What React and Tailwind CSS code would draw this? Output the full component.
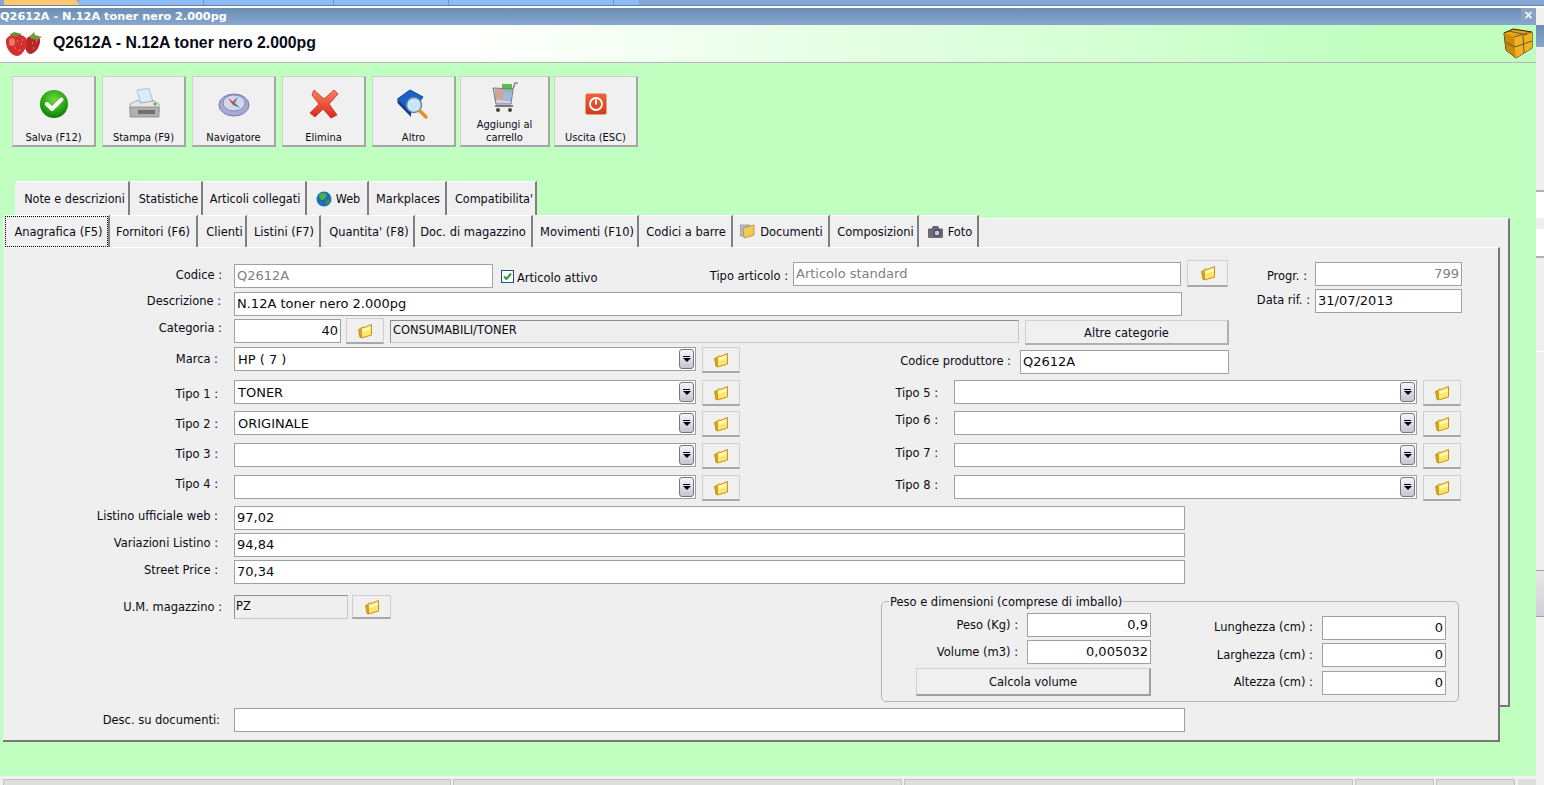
import React from 'react';

const FolderIcon = () => (
  <svg width="16" height="16" viewBox="0 0 16 16">
    <path d="M1.5 6.5 L5 5 L5 14 L3 14.5 Z" fill="#dca91e" stroke="#b8860b" strokeWidth="0.8" />
    <path d="M4 5 L6 3.8 L7 4.6 L14.5 1.5 L14.5 12 L4.5 15 Z" fill="#ffe66e" stroke="#c8920f" strokeWidth="1" />
    <path d="M5.5 6.2 L13.5 3.2 L13.5 6.2 L5.5 9 Z" fill="#fff8c0" />
  </svg>
);

const CheckIcon = () => (
  <svg width="30" height="30" viewBox="0 0 30 30">
    <defs>
      <radialGradient id="gr" cx="50%" cy="35%" r="70%">
        <stop offset="0%" stopColor="#6fdc3a" />
        <stop offset="70%" stopColor="#1f9a12" />
        <stop offset="100%" stopColor="#0b6e0b" />
      </radialGradient>
    </defs>
    <circle cx="15" cy="15" r="14" fill="url(#gr)" />
    <path d="M8 15 L13 20 L22.5 10.5" fill="none" stroke="#fff" strokeWidth="4" strokeLinecap="round" strokeLinejoin="round" />
  </svg>
);

const PrinterIcon = () => (
  <svg width="32" height="32" viewBox="0 0 32 32">
    <path d="M9 2 L21 0.5 L25 14 L13 16 Z" fill="#d8ecfb" stroke="#9fb4c8" strokeWidth="0.8" />
    <path d="M2 16 L10 12 L13 15 L25 13 L24 12 L31 16 L31 24 L2 24 Z" fill="#e6e6e6" stroke="#999" strokeWidth="0.8" />
    <path d="M2 19 L31 19 L31 29 L2 29 Z" fill="#b0b0b0" stroke="#888" strokeWidth="0.8" />
    <rect x="10" y="22" width="17" height="4" fill="#6f6f6f" />
    <circle cx="27" cy="16" r="1.5" fill="#45b445" />
  </svg>
);

const CompassIcon = () => (
  <svg width="32" height="26" viewBox="0 0 32 26">
    <ellipse cx="16" cy="14" rx="15" ry="11" fill="#a9a9d8" stroke="#7777a8" />
    <ellipse cx="16" cy="12" rx="11" ry="8" fill="#d4d6ee" stroke="#8a8ab8" />
    <path d="M10 7 L17 12 L15 14 Z" fill="#dd3322" />
    <path d="M22 17 L15 14 L17 12 Z" fill="#2f9a4a" />
    <path d="M20 6 L17 12 L15 10 Z" fill="#5577cc" />
  </svg>
);

const CrossIcon = () => (
  <svg width="30" height="30" viewBox="0 0 30 30">
    <defs>
      <linearGradient id="rd" x1="0" y1="0" x2="0" y2="1">
        <stop offset="0%" stopColor="#ff8060" />
        <stop offset="100%" stopColor="#d8281a" />
      </linearGradient>
    </defs>
    <path d="M5 1 L15 10 L25 1 L29 5 L20 15 L28 26 L22 29 L14 20 L6 28 L1 24 L10 15 L3 6 Z" fill="url(#rd)" stroke="#c02a18" strokeWidth="0.8" />
  </svg>
);

const BookIcon = () => (
  <svg width="33" height="31" viewBox="0 0 33 31">
    <path d="M0.5 10 L13 1 L26 8 L14 24 Z" fill="#1c63c8" stroke="#0f3e8c" />
    <path d="M0.5 10 L14 24 L14 28 L0.5 14 Z" fill="#0f3e8c" />
    <circle cx="17" cy="16" r="7.5" fill="#c8e6f8" stroke="#5e88b0" strokeWidth="1.5" />
    <path d="M23 22 L29 28" stroke="#f08a2a" strokeWidth="3.5" strokeLinecap="round" />
  </svg>
);

const CartIcon = () => (
  <svg width="28" height="32" viewBox="0 0 28 32">
    <rect x="11" y="3" width="10" height="10" fill="#4fc04f" />
    <rect x="4" y="8" width="9" height="11" fill="#ee8a3a" />
    <rect x="12" y="11" width="8" height="9" fill="#7fb8e8" />
    <path d="M2 7 L22 8 L20 23 L5 23 Z" fill="#b9b9dc" fillOpacity="0.55" stroke="#76768c" />
    <path d="M22 8 L24 2 L27 2" fill="none" stroke="#8a8a8a" strokeWidth="1.6" />
    <rect x="4" y="24" width="18" height="2" fill="#7a7a7a" />
    <circle cx="7" cy="29" r="2" fill="#444" />
    <circle cx="19" cy="29" r="2" fill="#444" />
  </svg>
);

const PowerIcon = () => (
  <svg width="22" height="22" viewBox="0 0 22 22">
    <defs>
      <linearGradient id="pw" x1="0" y1="0" x2="0" y2="1">
        <stop offset="0%" stopColor="#f0623c" />
        <stop offset="100%" stopColor="#cf3c16" />
      </linearGradient>
    </defs>
    <rect x="0.5" y="0.5" width="21" height="21" rx="2" fill="url(#pw)" />
    <circle cx="11" cy="11" r="6" fill="none" stroke="#fff" strokeWidth="1.8" />
    <path d="M11 6.5 L11 11.5" stroke="#fff" strokeWidth="2" />
  </svg>
);

const CubeIcon = () => (
  <svg width="30" height="31" viewBox="0 0 30 31">
    <path d="M1 5 L10 1 L29 4 L29 20 L13 30 L3 22 Z" fill="#e5a30f" stroke="#2b1d00" strokeWidth="1" />
    <path d="M1 5 L11 9 L13 30 L3 22 Z" fill="#c98a08" />
    <path d="M11 9 L29 4 L29 20 L13 30 Z" fill="#f0b21e" />
    <path d="M11 9 L29 4 M2 14 L12 19 L29 13 M20 6 L21 25 M6 3 L24 7" fill="none" stroke="#6a5a3a" strokeWidth="1" />
  </svg>
);

const StrawberryIcon = () => (
  <svg width="38" height="26" viewBox="0 0 38 26">
    <path d="M22 7 C26 3 33 4 35 8 C36 14 31 22 26 23 C21 23 18 16 22 7 Z" fill="#b82626" />
    <path d="M1 9 C2 3 16 1 21 7 C24 13 18 25 12 25 C6 25 0 16 1 9 Z" fill="#d42e2e" />
    <path d="M4 4 L9 1 L17 3 L11 6 Z" fill="#6a8a34" />
    <path d="M24 6 L29 1 L30 4 L37 6 L32 9 L27 8 Z" fill="#6f9a3a" />
    <ellipse cx="7" cy="11" rx="3" ry="4" fill="#ee7565" />
    <path d="M12 10 h1 M16 13 h1 M10 17 h1 M14 19 h1 M17 9 h1 M27 12 h1 M31 10 h1 M28 17 h1" stroke="#f6c8a8" strokeWidth="1" />
  </svg>
);

const GlobeIcon = () => (
  <svg width="16" height="16" viewBox="0 0 16 16">
    <circle cx="8" cy="8" r="7.5" fill="#1f6fb8" />
    <path d="M3 4 C6 1 10 2 11 4 C9 6 10 8 7 9 C5 9 3 7 3 4 Z" fill="#4fae3c" />
    <path d="M10 10 L14 8 L13 12 L10 14 Z" fill="#3f9a34" />
  </svg>
);

const DocsIcon = () => (
  <svg width="15" height="15" viewBox="0 0 15 15">
    <rect x="0.5" y="1" width="9" height="11" fill="#b4bcd0" stroke="#7a829a" strokeWidth="0.6" />
    <path d="M3 4 L14 1 L14 11 L4 14 Z" fill="#f0cc58" stroke="#b88a18" strokeWidth="0.8" />
  </svg>
);

const CameraIcon = () => (
  <svg width="15" height="12" viewBox="0 0 15 12">
    <path d="M0.5 3 L4 3 L5 0.5 L10 0.5 L11 3 L14.5 3 L14.5 11.5 L0.5 11.5 Z" fill="#6b6b7a" stroke="#3a3a44" strokeWidth="0.6" />
    <circle cx="9" cy="7" r="3" fill="#c8c8d8" stroke="#2f2f38" />
  </svg>
);

const FolderButton = ({ className }) => (
  <div className={`flex items-center justify-center bg-[#f0f0f0] border border-[#cfcfcf] border-b-2 border-b-[#a8a8a8] shrink-0 ${className}`}>
    <FolderIcon />
  </div>
);

const Field = ({ value, className = '', align = 'left', muted = false }) => (
  <div className={`flex items-center shrink-0 h-[24px] bg-white border border-[#a0a0a0] px-[2px] font-['DejaVu_Sans',sans-serif] text-[13px] ${align === 'right' ? 'justify-end' : ''} ${muted ? 'text-[#808080]' : 'text-[#0a0a14]'} ${className}`}>
    {value}
  </div>
);

const Combo = ({ value, className = '' }) => (
  <div className={`flex items-center justify-between shrink-0 h-[24px] bg-white border border-[#a0a0a0] pl-[3px] pr-px font-['DejaVu_Sans',sans-serif] text-[13px] ${className}`}>
    <span className="pt-px">{value}</span>
    <div className="flex flex-col items-center justify-center gap-px w-[15px] h-[20px] rounded-[3px] border border-[#777] bg-gradient-to-b from-[#f6f6f8] to-[#c6c6d2]">
      <div className="w-[7px] h-px bg-black" />
      <div className="w-0 h-0 border-x-[4px] border-x-transparent border-t-[4px] border-t-black" />
    </div>
  </div>
);

const Label = ({ children, className = '' }) => (
  <div className={`text-right shrink-0 h-[16px] leading-[16px] whitespace-nowrap ${className}`}>{children}</div>
);

const toolbar = [
  { text: 'Salva (F12)', icon: <CheckIcon />, w: 'w-[84px]' },
  { text: 'Stampa (F9)', icon: <PrinterIcon />, w: 'w-[84px]' },
  { text: 'Navigatore', icon: <CompassIcon />, w: 'w-[84px]' },
  { text: 'Elimina', icon: <CrossIcon />, w: 'w-[84px]' },
  { text: 'Altro', icon: <BookIcon />, w: 'w-[84px] mr-[-2px]' },
  { text: 'Aggiungi al carrello', icon: <CartIcon />, w: 'w-[90px] mr-[-2px]', twoLines: true },
  { text: 'Uscita (ESC)', icon: <PowerIcon />, w: 'w-[84px]' },
];

const tabsTop = [
  { text: 'Note e descrizioni', w: 'w-[115px] pl-[6px]' },
  { text: 'Statistiche', w: 'w-[73px] pl-[6px]' },
  { text: 'Articoli collegati', w: 'w-[104px] pl-[2px]' },
  { text: 'Web', w: 'w-[62px] pl-[2px]', icon: <GlobeIcon /> },
  { text: 'Markplaces', w: 'w-[78px] pl-[2px]' },
  { text: "Compatibilita'", w: 'w-[90px] pl-[6px]' },
];

const tabsBottom = [
  { text: 'Anagrafica (F5)', w: 'w-[105px]', active: true },
  { text: 'Fornitori (F6)', w: 'w-[88px]' },
  { text: 'Clienti', w: 'w-[49px] pl-[6px]' },
  { text: 'Listini (F7)', w: 'w-[74px] pl-[2px]' },
  { text: "Quantita' (F8)", w: 'w-[94px] pl-[4px]' },
  { text: 'Doc. di magazzino', w: 'w-[118px]' },
  { text: 'Movimenti (F10)', w: 'w-[106px] pl-[4px]' },
  { text: 'Codici a barre', w: 'w-[94px] pl-[2px]' },
  { text: 'Documenti', w: 'w-[97px] pl-[2px]', icon: <DocsIcon /> },
  { text: 'Composizioni', w: 'w-[89px] pl-[4px]' },
  { text: 'Foto', w: 'w-[60px] pl-[4px]', icon: <CameraIcon /> },
];

const comboRows = [
  { left: 'Tipo 1 :', value: 'TONER', right: 'Tipo 5 :', top: 'mt-[6px]', lm: 'mt-[6px]', rm: 'mt-[5px]' },
  { left: 'Tipo 2 :', value: 'ORIGINALE', right: 'Tipo 6 :', top: 'mt-[5px]', lm: 'mt-[5px]', rm: 'mt-px' },
  { left: 'Tipo 3 :', value: '', right: 'Tipo 7 :', top: 'mt-[6px]', lm: 'mt-[3px]', rm: 'mt-[2px]' },
  { left: 'Tipo 4 :', value: '', right: 'Tipo 8 :', top: 'mt-[6px]', lm: 'mt-[1px]', rm: 'mt-[2px]' },
];

const priceRows = [
  { label: 'Listino ufficiale web :', value: '97,02' },
  { label: 'Variazioni Listino :', value: '94,84' },
  { label: 'Street Price :', value: '70,34' },
];

const statusCells = ['w-[448px]', 'w-[449px]', 'w-[449px]', 'w-[79px]', 'w-[79px]'];

const App = () => {
  return (
    <div className="w-[1544px] h-[785px] overflow-hidden flex flex-col bg-[#f0f0f0] font-['DejaVu_Sans_Condensed','DejaVu_Sans',sans-serif] text-[12.75px] text-[#0a0a14]">
      {/* strip of the window behind */}
      <div className="flex h-[6px] shrink-0 bg-[#85a5d4] border-b border-[#5e83b4]">
        <div className="w-[75px] ml-[4px] bg-[#ffc870] rounded-tr-lg" />
        <div className="w-[125px] bg-[#8fbaf5] border-r border-[#6d94c8]" />
        <div className="w-[130px] bg-[#8fbaf5] border-r border-[#6d94c8]" />
        <div className="w-[115px] bg-[#8fbaf5] border-r border-[#6d94c8]" />
        <div className="w-[165px] bg-[#8fbaf5] border-r border-[#6d94c8]" />
        <div className="w-[25px] bg-[#8fbaf5]" />
      </div>
      <div className="h-[2px] shrink-0 bg-white" />

      <div className="flex flex-1 min-h-0">
        {/* main window */}
        <div className="w-[1536px] shrink-0 flex flex-col">
          <div className="h-[17px] shrink-0 flex items-center justify-between bg-gradient-to-b from-[#6c8eb5] to-[#87a8cc]">
            <span className="font-['DejaVu_Sans',sans-serif] font-bold text-[11.25px] text-white leading-none">Q2612A - N.12A toner nero 2.000pg</span>
            <div className="w-[15px] h-[13px] self-start flex items-center justify-center bg-[#87a3c4] text-white font-bold text-[13px] leading-none">×</div>
          </div>
          <div className="flex-1 min-h-0 bg-[#c0ffc0] flex flex-col">
            <div className="h-[38px] shrink-0 flex items-center bg-gradient-to-r from-white via-white via-30% to-[#c0ffc0] to-90% border-b border-[#b8b8b8] pl-[5px] pr-[3px]">
              <StrawberryIcon />
              <span className="ml-[10px] mb-[2px] flex-1 font-['Liberation_Sans',sans-serif] font-bold text-[15.85px]">Q2612A - N.12A toner nero 2.000pg</span>
              <CubeIcon />
            </div>

            <div className="flex pl-[12px] pt-[13px] gap-[6px] shrink-0">
              {toolbar.map((b) => (
                <div key={b.text} className={`${b.w} h-[71px] flex flex-col items-center text-[11px] bg-[#f0f0f0] border border-[#d0d0d0] border-b-2 border-r-2 border-b-[#a6a6a6] border-r-[#a6a6a6]`}>
                  <div className={`flex items-center justify-center ${b.twoLines ? 'h-[32px] mt-[4px]' : 'h-[38px] mt-[8px]'}`}>{b.icon}</div>
                  <div className={`text-center leading-[13px] ${b.twoLines ? 'mt-[5px] w-[70px]' : 'mt-[8px]'}`}>{b.text}</div>
                </div>
              ))}
            </div>

            <div className="flex pl-[15px] mt-[34px] h-[37px] shrink-0 text-[12.5px]">
              {tabsTop.map((t) => (
                <div key={t.text} className={`${t.w} h-full pb-[2px] flex items-center justify-center gap-[4px] bg-[#f0f0f0] border-t border-t-white border-r-2 border-r-[#808080] rounded-tl-[3px] whitespace-nowrap`}>
                  {t.icon}
                  {t.text}
                </div>
              ))}
            </div>

            {/* outer tab panel, the inner one hangs below it */}
            <div className="ml-[3px] w-[1507px] h-[489px] shrink-0 bg-[#efefef] border-t border-t-white border-r-2 border-r-[#777] border-b-2 border-b-[#777]">
              <div className="flex ml-[2px] mt-[-4px] h-[32px]">
                {tabsBottom.map((t) => (
                  <div key={t.text} className={`${t.w} h-full flex items-center justify-center gap-[5px] bg-[#f0f0f0] border-t border-t-white border-r-2 border-r-[#808080] rounded-tl-[3px] whitespace-nowrap`}>
                    {t.active ? (
                      <span className="flex items-center justify-center w-full h-full pl-[4px] border border-dotted border-black">{t.text}</span>
                    ) : (
                      <>
                        {t.icon}
                        {t.text}
                      </>
                    )}
                  </div>
                ))}
              </div>

              <div className="w-[1497px] h-[495px] bg-[#efefef] border-t border-t-white border-r-2 border-r-[#777] border-b-2 border-b-[#777] pt-[12px]">
                <div className="flex">
                  <div className="w-[1226px] shrink-0">
                    <div className="flex items-start h-[28px]">
                      <Label className="w-[219px] mt-[7px]">Codice :</Label>
                      <Field value="Q2612A" muted className="ml-[12px] w-[259px] mt-[4px]" />
                      <div className="ml-[8px] mt-[10px] w-[13px] h-[13px] shrink-0 flex items-center justify-center bg-white border border-[#1c5180]">
                        <svg width="9" height="9" viewBox="0 0 9 9">
                          <path d="M1 4.5 L3.5 7 L8 1.5" fill="none" stroke="#22a02a" strokeWidth="2" />
                        </svg>
                      </div>
                      <div className="ml-[3px] mt-[8px] w-[82px] shrink-0 whitespace-nowrap">Articolo attivo</div>
                      <Label className="w-[189px] mt-[8px]">Tipo articolo :</Label>
                      <Field value="Articolo standard" muted className="ml-[5px] w-[388px] mt-[2px]" />
                      <FolderButton className="ml-[6px] w-[41px] h-[27px]" />
                    </div>
                    <div className="flex items-start mt-[4px]">
                      <Label className="w-[218px] mt-px">Descrizione :</Label>
                      <Field value="N.12A toner nero 2.000pg" className="ml-[13px] w-[948px]" />
                    </div>
                    <div className="flex items-start mt-[2px] h-[27px]">
                      <Label className="w-[219px] mt-[2px]">Categoria :</Label>
                      <Field value="40" align="right" className="ml-[12px] w-[107px] mt-px" />
                      <FolderButton className="ml-[5px] w-[38px] h-[26px]" />
                      <div className="ml-[6px] mt-[2px] w-[629px] h-[23px] flex items-center pl-[2px] pb-[3px] bg-[#efefef] border border-[#c8c8c8] border-t-[#909090] border-l-[#909090]">CONSUMABILI/TONER</div>
                      <div className="ml-[6px] mt-[2px] w-[204px] h-[25px] flex items-center justify-center pt-px bg-[#f0f0f0] border border-[#d0d0d0] border-b-2 border-r-2 border-b-[#b0b0b0] border-r-[#b0b0b0]">Altre categorie</div>
                    </div>
                  </div>
                  <div className="pt-[2px]">
                    <div className="flex items-start">
                      <Label className="w-[78px] mt-[6px]">Progr. :</Label>
                      <Field value="799" align="right" muted className="ml-[8px] w-[147px]" />
                    </div>
                    <div className="flex items-start mt-[3px]">
                      <Label className="w-[81px] mt-[3px]">Data rif. :</Label>
                      <Field value="31/07/2013" className="ml-[5px] w-[147px]" />
                    </div>
                  </div>
                </div>

                <div className="flex items-start mt-[2px]">
                  <Label className="w-[215px] mt-[4px]">Marca :</Label>
                  <Combo value="HP ( 7 )" className="ml-[16px] w-[462px]" />
                  <FolderButton className="ml-[6px] w-[38px] h-[26px]" />
                  <Label className="w-[271px] mt-[6px]">Codice produttore :</Label>
                  <Field value="Q2612A" className="ml-[9px] w-[209px] mt-[3px]" />
                </div>

                {comboRows.map((r) => (
                  <div key={r.left} className={`flex items-start ${r.top}`}>
                    <Label className={`w-[215px] ${r.lm}`}>{r.left}</Label>
                    <Combo value={r.value} className="ml-[16px] w-[462px]" />
                    <FolderButton className="ml-[6px] w-[38px] h-[26px]" />
                    <Label className={`w-[198px] ${r.rm}`}>{r.right}</Label>
                    <Combo value="" className="ml-[16px] w-[463px]" />
                    <FolderButton className="ml-[6px] w-[38px] h-[26px]" />
                  </div>
                ))}

                <div className="mt-[5px] flex flex-col gap-[3px]">
                  {priceRows.map((r) => (
                    <div key={r.label} className="flex items-start">
                      <Label className="w-[215px] mt-[2px]">{r.label}</Label>
                      <Field value={r.value} className="ml-[16px] w-[951px]" />
                    </div>
                  ))}
                </div>

                <div className="flex items-start mt-[9px]">
                  <Label className="w-[219px] mt-[6px]">U.M. magazzino :</Label>
                  <div className="ml-[12px] mt-[2px] w-[114px] h-[24px] pl-px bg-[#efefef] border border-[#c8c8c8] border-t-[#909090] border-l-[#909090] shrink-0">PZ</div>
                  <FolderButton className="ml-[4px] mt-[2px] w-[39px] h-[24px]" />
                  <fieldset className="ml-[490px] w-[578px] h-[109px] border border-[#b4b4b4] rounded-[5px]">
                    <legend className="ml-[7px] px-px leading-[16px] whitespace-nowrap relative top-px">Peso e dimensioni (comprese di imballo)</legend>
                    <div className="flex">
                      <div className="w-[269px] pt-[4px] shrink-0">
                        <div className="flex items-start">
                          <Label className="w-[136px] mt-[4px]">Peso (Kg) :</Label>
                          <Field value="0,9" align="right" className="ml-[9px] w-[124px]" />
                        </div>
                        <div className="flex items-start mt-[3px]">
                          <Label className="w-[136px] mt-[4px]">Volume (m3) :</Label>
                          <Field value="0,005032" align="right" className="ml-[9px] w-[124px]" />
                        </div>
                        <div className="ml-[34px] mt-[4px] w-[235px] h-[28px] flex items-center justify-center pt-px bg-[#f0f0f0] border border-[#d0d0d0] border-b-2 border-r-2 border-b-[#a0a0a0] border-r-[#a0a0a0]">Calcola volume</div>
                      </div>
                      <div className="pt-[7px]">
                        <div className="flex items-start">
                          <Label className="w-[162px] mt-[3px]">Lunghezza (cm) :</Label>
                          <Field value="0" align="right" className="ml-[9px] w-[124px]" />
                        </div>
                        <div className="flex items-start mt-[3px]">
                          <Label className="w-[162px] mt-[4px]">Larghezza (cm) :</Label>
                          <Field value="0" align="right" className="ml-[9px] w-[124px]" />
                        </div>
                        <div className="flex items-start mt-[4px]">
                          <Label className="w-[162px] mt-[3px]">Altezza (cm) :</Label>
                          <Field value="0" align="right" className="ml-[9px] w-[124px]" />
                        </div>
                      </div>
                    </div>
                  </fieldset>
                </div>

                <div className="flex items-start mt-[6px]">
                  <Label className="w-[217px] mt-[4px]">Desc. su documenti:</Label>
                  <Field value="" className="ml-[14px] w-[951px]" />
                </div>
              </div>
            </div>
          </div>
        </div>

        {/* edge of the window behind */}
        <div className="flex-1 flex flex-col">
          <div className="h-[17px] bg-[#f0f0f0]" />
          <div className="h-[22px] bg-gradient-to-b from-[#6c8eb5] to-[#87a8cc]" />
          <div className="h-[143px] bg-[#efefef]" />
          <div className="h-[28px] bg-white border-t-2 border-[#b0b0b0]" />
          <div className="h-[11px] bg-[#efefef]" />
          <div className="h-[29px] bg-white border-b-2 border-[#b0b0b0]" />
          <div className="h-[94px] bg-[#efefef] border-b border-white" />
          <div className="h-[218px] bg-[#efefef]" />
          <div className="h-[47px] bg-gradient-to-b from-[#e8e8e8] to-[#d0d0d6] border-y border-[#a0a0a0]" />
        </div>
      </div>

      <div className="h-[9px] shrink-0 bg-[#f0f0f0]">
        <div className="flex pl-[3px] pt-[3px] gap-[2px]">
          {statusCells.map((w, i) => (
            <div key={i} className={`${w} h-[6px] bg-[#dedede] border-t border-x border-[#c0c0c0]`} />
          ))}
          <div className="ml-px w-[18px] h-[6px] bg-[#dedede]" />
        </div>
      </div>
    </div>
  );
};

export default App;
